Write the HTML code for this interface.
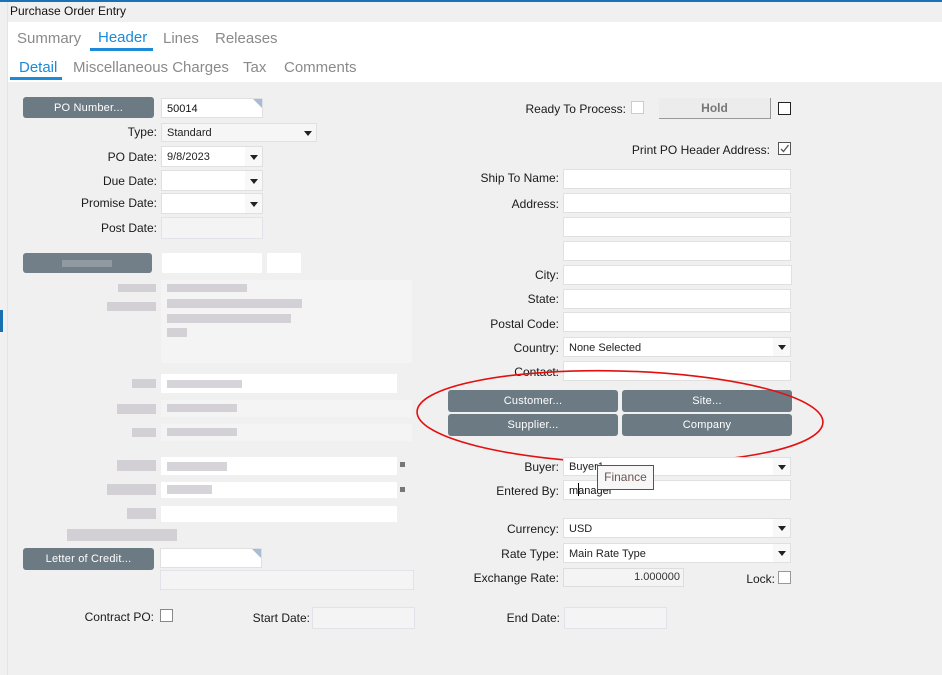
<!DOCTYPE html>
<html><head><meta charset="utf-8"><style>
*{box-sizing:border-box;margin:0;padding:0}
body{width:942px;height:675px;position:relative;overflow:hidden;background:#f0f0f0;font-family:"Liberation Sans",sans-serif;font-size:12px;color:#1a1a1a}
.a{position:absolute}
.lbl{position:absolute;text-align:right;white-space:nowrap;font-size:12px;line-height:14px}
.in{position:absolute;background:#fff;border:1px solid #e0e0e0}
.dis{position:absolute;background:#f4f4f4;border:1px solid #e2e2e8}
.btn{position:absolute;background:#6c7a84;color:#fff;border-radius:3px;text-align:center;font-size:11px;line-height:22px;letter-spacing:.2px}
.cb{position:absolute;width:13px;height:13px;border:1px solid #666;background:#fff}
.dd{position:absolute;right:0;top:0;bottom:0;width:17px;background:#f8f8f8}
.dd:after{content:"";position:absolute;left:5px;top:50%;margin-top:-2px;border-left:4px solid transparent;border-right:4px solid transparent;border-top:5px solid #222}
.txt{position:absolute;left:5px;top:1px;font-size:11px;line-height:18px;color:#222}
.blur{position:absolute;background:#c9c6cc;opacity:.75}
.tab{position:absolute;font-size:15px;color:#8a8a8a;white-space:nowrap}
</style></head><body>
<div class="a" style="left:0;top:0;width:942px;height:2px;background:#1a72b8"></div>
<div class="a" style="left:8px;top:2px;width:934px;height:20px;background:#f0f0f0"></div>
<div class="a" style="left:10px;top:4px;font-size:12px;color:#111">Purchase Order Entry</div>
<div class="a" style="left:8px;top:22px;width:934px;height:60px;background:#fff"></div>
<div class="a" style="left:0;top:2px;width:8px;height:673px;background:#f0f0f0;border-right:1px solid #e4e4e4"></div>
<div class="a" style="left:0;top:310px;width:3px;height:22px;background:#1a6fb0"></div>

<div class="tab" style="left:17px;top:30px">Summary</div>
<div class="tab" style="left:98px;top:29px;color:#1c8ad6">Header</div>
<div class="a" style="left:90px;top:48px;width:63px;height:3px;background:#1c8ad6"></div>
<div class="tab" style="left:163px;top:30px">Lines</div>
<div class="tab" style="left:215px;top:30px">Releases</div>
<div class="tab" style="left:19px;top:59px;color:#1c8ad6">Detail</div>
<div class="a" style="left:10px;top:77px;width:52px;height:3px;background:#1c8ad6"></div>
<div class="tab" style="left:73px;top:59px">Miscellaneous Charges</div>
<div class="tab" style="left:243px;top:59px">Tax</div>
<div class="tab" style="left:284px;top:59px">Comments</div>

<div class="btn" style="left:23px;top:97px;width:131px;height:21px">PO Number...</div>
<div class="in" style="left:161px;top:98px;width:102px;height:20px"><div class="txt" style="color:#111">50014</div><div class="a" style="right:0;top:0;width:0;height:0;border-left:9px solid transparent;border-top:9px solid #a9bcd6"></div></div>
<div class="lbl" style="right:785px;top:125px">Type:</div>
<div class="in" style="left:161px;top:123px;width:156px;height:19px;background:#f6f6f6"><div class="txt" style="top:0">Standard</div><div class="dd" style="background:transparent"></div></div>
<div class="lbl" style="right:785px;top:150px">PO Date:</div>
<div class="in" style="left:161px;top:146px;width:102px;height:21px"><div class="txt" style="line-height:19px">9/8/2023</div><div class="dd"></div></div>
<div class="lbl" style="right:785px;top:174px">Due Date:</div>
<div class="in" style="left:161px;top:170px;width:102px;height:21px"><div class="dd"></div></div>
<div class="lbl" style="right:785px;top:196px">Promise Date:</div>
<div class="in" style="left:161px;top:193px;width:102px;height:21px"><div class="dd"></div></div>
<div class="lbl" style="right:785px;top:221px">Post Date:</div>
<div class="dis" style="left:161px;top:217px;width:102px;height:22px"></div>

<div class="btn" style="left:23px;top:253px;width:129px;height:20px;background:#737f88"></div>
<div class="blur" style="left:62px;top:260px;width:50px;height:7px;background:#9aa3ab"></div>
<div class="in" style="left:162px;top:253px;width:100px;height:20px;border:none"></div>
<div class="in" style="left:267px;top:253px;width:34px;height:20px;border:none"></div>
<div class="blur" style="left:118px;top:284px;width:38px;height:8px"></div>
<div class="blur" style="left:107px;top:302px;width:49px;height:9px"></div>
<div class="dis" style="left:161px;top:280px;width:251px;height:83px;border:none"></div>
<div class="blur" style="left:167px;top:284px;width:80px;height:8px"></div>
<div class="blur" style="left:167px;top:299px;width:135px;height:9px"></div>
<div class="blur" style="left:167px;top:314px;width:124px;height:9px"></div>
<div class="blur" style="left:167px;top:328px;width:20px;height:9px"></div>
<div class="blur" style="left:132px;top:379px;width:24px;height:9px"></div>
<div class="in" style="left:161px;top:374px;width:236px;height:19px;border:none"></div>
<div class="blur" style="left:167px;top:380px;width:75px;height:8px"></div>
<div class="blur" style="left:117px;top:404px;width:39px;height:10px"></div>
<div class="dis" style="left:161px;top:400px;width:251px;height:17px;border:none"></div>
<div class="blur" style="left:167px;top:404px;width:70px;height:8px"></div>
<div class="blur" style="left:132px;top:428px;width:24px;height:9px"></div>
<div class="dis" style="left:161px;top:424px;width:251px;height:17px;border:none"></div>
<div class="blur" style="left:167px;top:428px;width:70px;height:8px"></div>
<div class="blur" style="left:117px;top:460px;width:39px;height:11px"></div>
<div class="in" style="left:161px;top:457px;width:236px;height:18px;border:none"></div>
<div class="blur" style="left:167px;top:462px;width:60px;height:9px"></div>
<div class="blur" style="left:107px;top:484px;width:49px;height:11px"></div>
<div class="in" style="left:161px;top:482px;width:236px;height:16px;border:none"></div>
<div class="blur" style="left:167px;top:485px;width:45px;height:9px"></div>
<div class="blur" style="left:127px;top:508px;width:29px;height:11px"></div>
<div class="in" style="left:161px;top:506px;width:236px;height:16px;border:none"></div>
<div class="blur" style="left:67px;top:529px;width:110px;height:12px"></div>
<div class="a" style="left:400px;top:462px;width:5px;height:5px;background:#777"></div>
<div class="a" style="left:400px;top:487px;width:5px;height:5px;background:#777"></div>

<div class="btn" style="left:23px;top:548px;width:131px;height:22px">Letter of Credit...</div>
<div class="in" style="left:160px;top:548px;width:102px;height:20px"><div class="a" style="right:0;top:0;width:0;height:0;border-left:9px solid transparent;border-top:9px solid #a9bcd6"></div></div>
<div class="dis" style="left:160px;top:570px;width:254px;height:20px"></div>
<div class="lbl" style="right:788px;top:610px">Contract PO:</div>
<div class="cb" style="left:160px;top:609px;border-color:#888"></div>
<div class="lbl" style="right:632px;top:611px">Start Date:</div>
<div class="dis" style="left:312px;top:607px;width:103px;height:22px"></div>

<div class="lbl" style="right:316px;top:102px">Ready To Process:</div>
<div class="cb" style="left:631px;top:101px;border-color:#ccc"></div>
<div class="a" style="left:659px;top:98px;width:112px;height:21px;background:#ececec;border-right:1px solid #999;border-bottom:1px solid #999;text-align:center;line-height:20px;font-weight:bold;color:#777">Hold</div>
<div class="cb" style="left:778px;top:102px;border-color:#222"></div>
<div class="lbl" style="right:172px;top:143px">Print PO Header Address:</div>
<div class="cb" style="left:778px;top:142px;border-color:#555"><svg width="11" height="11" style="position:absolute;left:0;top:0"><path d="M2 6 L4.5 8.5 L9.5 2" stroke="#555" fill="none" stroke-width="1.3"/></svg></div>

<div class="lbl" style="right:383px;top:171px">Ship To Name:</div>
<div class="in" style="left:563px;top:169px;width:228px;height:20px"></div>
<div class="lbl" style="right:383px;top:197px">Address:</div>
<div class="in" style="left:563px;top:193px;width:228px;height:20px"></div>
<div class="in" style="left:563px;top:217px;width:228px;height:20px"></div>
<div class="in" style="left:563px;top:241px;width:228px;height:20px"></div>
<div class="lbl" style="right:383px;top:268px">City:</div>
<div class="in" style="left:563px;top:265px;width:229px;height:20px"></div>
<div class="lbl" style="right:383px;top:292px">State:</div>
<div class="in" style="left:563px;top:289px;width:228px;height:20px"></div>
<div class="lbl" style="right:383px;top:317px">Postal Code:</div>
<div class="in" style="left:563px;top:312px;width:228px;height:20px"></div>
<div class="lbl" style="right:383px;top:341px">Country:</div>
<div class="in" style="left:563px;top:337px;width:228px;height:20px"><div class="txt">None Selected</div><div class="dd"></div></div>
<div class="lbl" style="right:383px;top:365px">Contact:</div>
<div class="in" style="left:563px;top:361px;width:228px;height:20px"></div>

<div class="btn" style="left:448px;top:390px;width:170px;height:22px">Customer...</div>
<div class="btn" style="left:622px;top:390px;width:170px;height:22px">Site...</div>
<div class="btn" style="left:448px;top:414px;width:170px;height:22px">Supplier...</div>
<div class="btn" style="left:622px;top:414px;width:170px;height:22px">Company</div>

<svg class="a" style="left:0;top:0" width="942" height="675"><ellipse cx="620" cy="417" rx="203" ry="46" transform="rotate(1.5 620 417)" fill="none" stroke="#e31010" stroke-width="1.6"/></svg>

<div class="lbl" style="right:383px;top:460px">Buyer:</div>
<div class="in" style="left:563px;top:457px;width:228px;height:19px"><div class="txt" style="top:0">Buyer1</div><div class="dd"></div></div>
<div class="lbl" style="right:383px;top:484px">Entered By:</div>
<div class="in" style="left:563px;top:480px;width:228px;height:20px"><div class="txt" style="color:#111">manager</div></div>
<div class="a" style="left:578px;top:483px;width:1px;height:13px;background:#000"></div>
<div class="a" style="left:597px;top:465px;width:57px;height:25px;background:#f7f7f7;border:1px solid #555;color:#6b5550;font-size:12px;line-height:23px;text-align:center">Finance</div>

<div class="lbl" style="right:383px;top:522px">Currency:</div>
<div class="in" style="left:563px;top:518px;width:228px;height:20px"><div class="txt">USD</div><div class="dd"></div></div>
<div class="lbl" style="right:383px;top:547px">Rate Type:</div>
<div class="in" style="left:563px;top:543px;width:228px;height:20px"><div class="txt">Main Rate Type</div><div class="dd"></div></div>
<div class="lbl" style="right:383px;top:571px">Exchange Rate:</div>
<div class="dis" style="left:563px;top:568px;width:121px;height:19px;border-color:#ddd"><div class="a" style="right:3px;top:0;font-size:11px;line-height:17px;color:#333">1.000000</div></div>
<div class="lbl" style="right:167px;top:572px">Lock:</div>
<div class="cb" style="left:778px;top:571px;border-color:#999"></div>
<div class="lbl" style="right:382px;top:611px">End Date:</div>
<div class="dis" style="left:564px;top:607px;width:103px;height:22px"></div>
</body></html>
